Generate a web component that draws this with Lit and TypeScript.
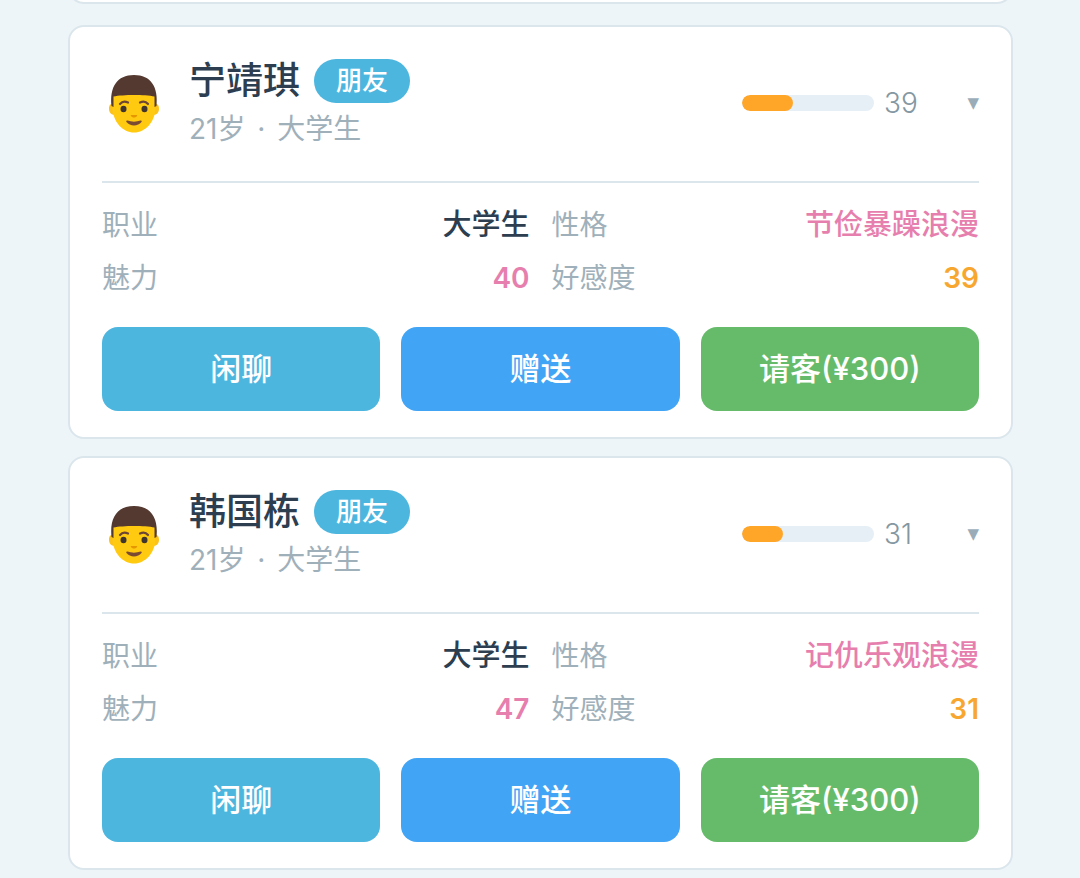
import {LitElement, css, html} from 'lit';
import {customElement, property} from 'lit/decorators.js';

interface Contact {
  name: string;
  relation: string;
  age: number;
  job: string;
  traits: string;
  charm: number;
  affection: number;
}

const contacts: Contact[] = [
  {name: '宁靖琪', relation: '朋友', age: 21, job: '大学生', traits: '节俭暴躁浪漫', charm: 40, affection: 39},
  {name: '韩国栋', relation: '朋友', age: 21, job: '大学生', traits: '记仇乐观浪漫', charm: 47, affection: 31},
];

@customElement('man-avatar')
export class ManAvatar extends LitElement {
  static styles = css`
    :host {
      display: block;
      flex: none;
      width: 64px;
      height: 64px;
    }

    svg {
      display: block;
      width: 100%;
      height: 100%;
    }
  `;

  render() {
    return html`
      <svg viewBox="0 -1 64 64" aria-hidden="true">
        <path fill="#fcc21b" d="M12 32c-4-1-5 2-5 5s2 6 6 6h38c4 0 6-3 6-6s-1-6-5-5z" />
        <path fill="#ffca10" d="M10.500 28C10.500 12 20 7 32 7s21.500 5 21.500 21v7c0 15-10.500 25.500-21.500 25.500S10.500 50 10.500 35z" />
        <path fill="#543930" d="M9.500 34C7.500 15 15 3 32 3s24.500 12 22.500 31l-2 1V24.500C43 22.500 21 22.500 11.500 24.500V35z" />
        <g fill="none" stroke="#6d4636" stroke-width="2.200" stroke-linecap="round">
          <path d="M18 32c2-2.500 5-3 8-1.500" />
          <path d="M38 30.500c3-1.500 6-1 8 1.500" />
        </g>
        <ellipse cx="21.500" cy="37" rx="3" ry="3.200" fill="#40352f" />
        <ellipse cx="42.500" cy="37" rx="3" ry="3.200" fill="#40352f" />
        <path fill="#e59600" d="M29 43h6c.8.600-.8 2.500-3 2.500s-3.800-1.900-3-2.500z" />
        <path fill="#7b4a32" d="M25.500 48.500c4 1.500 9 1.500 13 0 1.300-.4 1.500.8 1 1.500-3.500 4.500-11.500 4.500-15 0-.5-.7-.3-1.900 1-1.500z" />
      </svg>
    `;
  }
}

@customElement('contact-card')
export class ContactCard extends LitElement {
  static styles = css`
    :host {
      display: block;
      box-sizing: border-box;
      padding: 28px 32px 26px;
      border: 2px solid #dbe6ec;
      border-radius: 16px;
      background-color: #fff;
    }

    .header {
      display: flex;
      align-items: center;
      padding-bottom: 30px;
      border-bottom: 2px solid #dbe6ec;
    }

    .info {
      flex: 1;
      margin-left: 23px;
    }

    .title {
      display: flex;
      align-items: center;
      gap: 14px;
      height: 52px;
    }

    .name {
      margin: 0;
      font-size: 37px;
      font-weight: 500;
      line-height: 52px;
      color: #2c3e50;
    }

    .badge {
      padding: 0 22px;
      border-radius: 22px;
      font-size: 26px;
      font-weight: 500;
      line-height: 44px;
      color: #fff;
      background-color: #4db6df;
    }

    .summary {
      margin: 0;
      font-size: 28px;
      line-height: 44px;
      color: #9fb0ba;
    }

    .dot {
      margin: 0 4px;
    }

    .meter {
      width: 132px;
      height: 16px;
      border-radius: 8px;
      overflow: hidden;
      background-color: #e6eff6;
    }

    .meter-fill {
      height: 100%;
      border-radius: 8px;
      background-color: #ffa629;
    }

    .score {
      width: 71px;
      margin-left: 10px;
      font-size: 28px;
      font-weight: 300;
      line-height: 44px;
      color: #8497a2;
    }

    .toggle {
      margin: 0;
      padding: 0;
      width: 24px;
      border: none;
      font-family: "DejaVu Sans", sans-serif;
      font-size: 15px;
      line-height: 44px;
      text-align: right;
      color: #9aacb8;
      background: none;
      cursor: pointer;
    }

    .stats {
      display: grid;
      grid-template-columns: 1fr 1fr;
      gap: 11px 22px;
      margin: 21px 0 28px;
      font-size: 28px;
      line-height: 42px;
    }

    .stat {
      display: flex;
      justify-content: space-between;
    }

    .stat-label {
      color: #9fb0ba;
    }

    .stat-value {
      margin: 0;
      font-size: 29px;
      font-weight: 500;
      color: #2c3e50;
    }

    .stat-value--pink {
      color: #e77fae;
    }

    .stat-value--orange {
      color: #f7a72f;
    }

    .stat-value--number {
      font-size: 28px;
      font-weight: 600;
    }

    .actions {
      display: grid;
      grid-template-columns: repeat(3, 1fr);
      gap: 21px;
    }

    .action {
      margin: 0;
      padding: 0;
      border: none;
      border-radius: 16px;
      font: inherit;
      font-size: 31px;
      font-weight: 500;
      line-height: 84px;
      color: #fff;
      cursor: pointer;
    }

    .action--chat {
      background-color: #4db6df;
    }

    .action--gift {
      background-color: #42a4f5;
    }

    .action--treat {
      background-color: #66bb6a;
    }
  `;

  @property({attribute: false})
  contact!: Contact;

  render() {
    const c = this.contact;
    return html`
      <header class="header">
        <man-avatar></man-avatar>
        <div class="info">
          <div class="title">
            <h2 class="name">${c.name}</h2>
            <span class="badge">${c.relation}</span>
          </div>
          <p class="summary">${c.age}岁 <span class="dot">·</span> ${c.job}</p>
        </div>
        <div class="meter" role="meter" aria-label="好感度" aria-valuemin="0" aria-valuemax="100" aria-valuenow=${c.affection}>
          <div class="meter-fill" style="width: ${c.affection}%"></div>
        </div>
        <span class="score">${c.affection}</span>
        <button class="toggle" aria-label="收起" aria-expanded="true">▼</button>
      </header>
      <dl class="stats">
        <div class="stat">
          <dt class="stat-label">职业</dt>
          <dd class="stat-value">${c.job}</dd>
        </div>
        <div class="stat">
          <dt class="stat-label">性格</dt>
          <dd class="stat-value stat-value--pink">${c.traits}</dd>
        </div>
        <div class="stat">
          <dt class="stat-label">魅力</dt>
          <dd class="stat-value stat-value--pink stat-value--number">${c.charm}</dd>
        </div>
        <div class="stat">
          <dt class="stat-label">好感度</dt>
          <dd class="stat-value stat-value--orange stat-value--number">${c.affection}</dd>
        </div>
      </dl>
      <div class="actions">
        <button class="action action--chat">闲聊</button>
        <button class="action action--gift">赠送</button>
        <button class="action action--treat">请客(¥300)</button>
      </div>
    `;
  }
}

@customElement('app-root')
export class AppRoot extends LitElement {
  static styles = css`
    :host {
      display: block;
      box-sizing: border-box;
      min-height: 100vh;
      padding: 0 67px 8px 68px;
      font-family: Inter, "Noto Sans CJK SC", sans-serif;
      background-color: #edf5f9;
    }

    /* tail of the card scrolled off above the list */
    .scrolled {
      display: flex;
      flex-direction: column;
      justify-content: flex-end;
      height: 4px;
      margin-bottom: 21px;
      overflow: hidden;
    }

    .scrolled-card {
      flex: none;
      height: 40px;
      box-sizing: border-box;
      border: 2px solid #dbe6ec;
      border-radius: 16px;
      background-color: #fff;
    }

    .list {
      display: flex;
      flex-direction: column;
      gap: 17px;
    }
  `;

  render() {
    return html`
      <div class="scrolled"><div class="scrolled-card"></div></div>
      <main class="list">
        ${contacts.map((contact) => html`<contact-card .contact=${contact}></contact-card>`)}
      </main>
    `;
  }
}
